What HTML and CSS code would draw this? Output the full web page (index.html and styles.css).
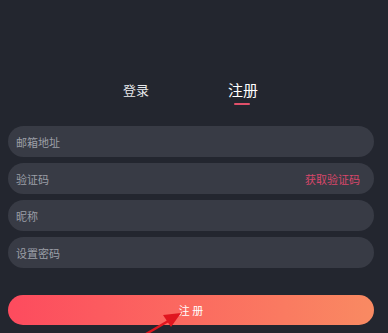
FILE: index.html
```html
<!DOCTYPE html>
<html>
<head>
<meta charset="utf-8">
<link rel="stylesheet" href="styles.css">
</head>
<body>
<div class="page">
  <div class="tabs">
    <div class="tab">登录</div>
    <div class="tab active">注册<span class="bar"></span></div>
  </div>
  <div class="form">
    <div class="field"><span class="ph">邮箱地址</span></div>
    <div class="field"><span class="ph">验证码</span><span class="code">获取验证码</span></div>
    <div class="field"><span class="ph">昵称</span></div>
    <div class="field"><span class="ph">设置密码</span></div>
  </div>
  <div class="btn">注 册</div>
  <svg class="arrow" width="388" height="333" viewBox="0 0 388 333">
    <line x1="146" y1="334" x2="170" y2="320" stroke="#e0161f" stroke-width="2.5"/>
    <polygon points="181,313 163,315 171,327" fill="#e0161f"/>
  </svg>
</div>
</body>
</html>
```
FILE: styles.css
```css
html, body {
  margin: 0;
  padding: 0;
  background: #23262f;
}
.page {
  position: relative;
  width: 388px;
  height: 333px;
  overflow: hidden;
  font-family: "Noto Sans CJK SC", "Noto Sans", sans-serif;
}
.tabs {
  display: flex;
  align-items: center;
  gap: 79px;
  padding: 80px 0 0 123px;
}
.tab {
  position: relative;
  font-size: 13px;
  line-height: 20px;
  color: #e8e9ec;
}
.tab.active {
  font-size: 15px;
  color: #ffffff;
}
.bar {
  position: absolute;
  left: 6px;
  top: 23px;
  width: 16px;
  height: 2px;
  border-radius: 1px;
  background: #e0506a;
}
.form {
  display: flex;
  flex-direction: column;
  gap: 6px;
  margin: 26px 14px 0 8px;
}
.field {
  height: 31px;
  border-radius: 15.5px;
  background: #383b45;
  display: flex;
  align-items: center;
  justify-content: space-between;
  padding: 0 14px 0 8px;
}
.ph {
  font-size: 11px;
  color: #9c9fa7;
}
.code {
  font-size: 11px;
  color: #d9476a;
}
.btn {
  margin: 27px 14px 0 8px;
  height: 30px;
  border-radius: 15px;
  background: linear-gradient(to right, #fd4b5e, #f98a62);
  color: #ffffff;
  font-size: 11px;
  display: flex;
  align-items: center;
  justify-content: center;
}
.arrow {
  position: absolute;
  left: 0;
  top: 0;
}
```
